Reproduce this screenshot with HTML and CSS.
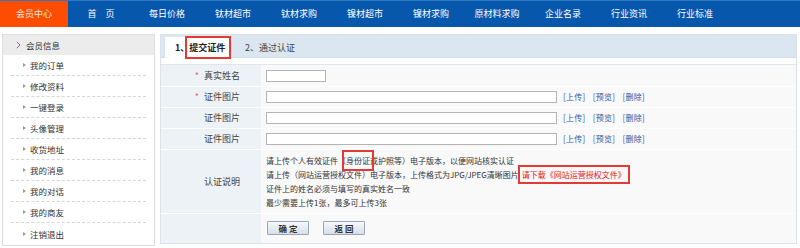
FILE: index.html
```html
<!DOCTYPE html>
<html lang="zh-CN">
<head>
<meta charset="utf-8">
<title>会员中心</title>
<link rel="stylesheet" href="styles.css">
</head>
<body>
<nav class="topnav">
  <a class="nav-item active">会员中心</a>
  <a class="nav-item">首&emsp;页</a>
  <a class="nav-item">每日价格</a>
  <a class="nav-item">钛材超市</a>
  <a class="nav-item">钛材求购</a>
  <a class="nav-item">镍材超市</a>
  <a class="nav-item">镍材求购</a>
  <a class="nav-item">原材料求购</a>
  <a class="nav-item">企业名录</a>
  <a class="nav-item">行业资讯</a>
  <a class="nav-item">行业标准</a>
</nav>
<div class="page">
  <aside class="sidebar">
    <div class="side-head">
      <svg class="chev" width="5" height="8" viewBox="0 0 5 8"><path d="M0.8 0.8 L4 4 L0.8 7.2" fill="none" stroke="#777" stroke-width="1"/></svg>
      <span>会员信息</span>
    </div>
    <ul class="side-list">
      <li><i class="tri"></i>我的订单</li>
      <li><i class="tri"></i>修改资料</li>
      <li><i class="tri"></i>一键登录</li>
      <li><i class="tri"></i>头像管理</li>
      <li><i class="tri"></i>收货地址</li>
      <li><i class="tri"></i>我的消息</li>
      <li><i class="tri"></i>我的对话</li>
      <li><i class="tri"></i>我的商友</li>
      <li class="last"><i class="tri"></i>注销退出</li>
    </ul>
  </aside>
  <main class="panel">
    <div class="tabs">
      <div class="tab active">1、<span class="mark tab-mark">提交证件</span></div>
      <div class="tab">2、通过认证</div>
    </div>
    <table class="form">
      <tr class="r1">
        <th><span class="req">*</span>真实姓名</th>
        <td><input class="inp short" type="text"></td>
      </tr>
      <tr class="r2">
        <th><span class="req">*</span>证件图片</th>
        <td><input class="inp long" type="text"><span class="ops"><a>[上传]</a> <a>[预览]</a> <a>[删除]</a></span></td>
      </tr>
      <tr class="r2">
        <th>证件图片</th>
        <td><input class="inp long" type="text"><span class="ops"><a>[上传]</a> <a>[预览]</a> <a>[删除]</a></span></td>
      </tr>
      <tr class="r2">
        <th>证件图片</th>
        <td><input class="inp long" type="text"><span class="ops"><a>[上传]</a> <a>[预览]</a> <a>[删除]</a></span></td>
      </tr>
      <tr class="r5">
        <th>认证说明</th>
        <td>
          <div class="desc">
            <p>请上传个人有效证件（<span class="mark id-mark">身份证</span>或护照等）电子版本，以便网站核实认证</p>
            <p>请上传（网站运营授权文件）电子版本，上传格式为JPG/JPEG清晰图片<a class="mark dl">请下载《网站运营授权文件》</a></p>
            <p>证件上的姓名必须与填写的真实姓名一致</p>
            <p>最少需要上传1张，最多可上传3张</p>
          </div>
        </td>
      </tr>
      <tr class="r6">
        <th></th>
        <td><div class="btns"><button class="btn">确 定</button><button class="btn">返 回</button></div></td>
      </tr>
    </table>
  </main>
</div>
</body>
</html>
```

FILE: styles.css
```css
* { box-sizing: border-box; }
body {
  margin: 0;
  font-family: "Noto Sans CJK SC", "Liberation Sans", sans-serif;
  color: #333;
  background: #fff;
}
a { text-decoration: none; }

.topnav {
  display: flex;
  height: 27px;
  background: #0757ad;
  border-top: 1px solid #2f78c4;
}
.nav-item {
  width: 66px;
  text-align: center;
  color: #fff;
  font-size: 9px;
  line-height: 26px;
}
.nav-item.active {
  width: 68px;
  background: #ff4d00;
  color: #ffe9dd;
}

.page {
  display: flex;
  gap: 5px;
  padding: 7px 3px 0 2px;
}

.sidebar {
  width: 153px;
  height: 212px;
  border: 1px solid #dedede;
  background: #fff;
}
.side-head {
  height: 20px;
  background: #ececec;
  display: flex;
  align-items: center;
  gap: 5px;
  padding-left: 13px;
  font-size: 8.5px;
  color: #333;
}
.side-list {
  list-style: none;
  margin: 0;
  padding: 0 8px;
}
.side-list li {
  height: 21px;
  display: flex;
  align-items: center;
  gap: 4px;
  padding-left: 12px;
  font-size: 8.5px;
  border-bottom: 1px dashed #d6d6d6;
}
.side-list li.last { border-bottom: none; }
.tri {
  width: 0;
  height: 0;
  border-top: 2.5px solid transparent;
  border-bottom: 2.5px solid transparent;
  border-left: 3px solid #9a9a9a;
}

.panel {
  flex: 1;
  height: 210px;
  border: 1px solid #dbe2ea;
  background: #fff;
}
.tabs {
  height: 23px;
  background: #dbe6f0;
  display: flex;
  align-items: flex-end;
  padding-left: 4px;
  border-bottom: 1px solid #d3dee9;
}
.tab {
  height: 20px;
  display: flex;
  align-items: center;
  font-size: 9px;
  color: #444;
  padding-left: 15px;
}
.tab.active {
  width: 65px;
  padding-left: 10px;
  background: #fff;
  font-weight: bold;
  color: #222;
  margin-bottom: -1px;
  height: 21px;
}

.mark {
  outline: 2px solid #e23a35;
}
.tab-mark {
  padding: 3px 4px 3px 2px;
  margin: 0 -4px 0 -2px;
}

.form {
  width: 100%;
  margin-top: 6px;
  border-collapse: collapse;
  border-top: 1px solid #dfe6ee;
}
.form th {
  width: 100px;
  background: #edf2f7;
  text-align: right;
  padding: 0 21px 0 0;
  font-size: 9px;
  line-height: 12px;
  font-weight: normal;
  color: #444;
  border-bottom: 1px solid #fff;
}
.form td {
  background: #f9f9f9;
  padding: 0 0 0 5px;
  font-size: 8px;
  line-height: 12px;
  border-bottom: 1px solid #fff;
}
.form tr.r1 { height: 22px; }
.form tr.r2 { height: 21px; }
.form tr.r5 { height: 64px; }
.form tr.r6 { height: 29px; }
.form tr:last-child th, .form tr:last-child td { border-bottom: none; }

.req {
  color: #e26a6a;
  margin-right: 5px;
}

.inp {
  height: 12px;
  border: 1px solid #b4b4b4;
  background: #fff;
  vertical-align: middle;
  padding: 0;
  margin: 0;
}
.inp.short { width: 60px; }
.inp.long { width: 291px; }
.ops {
  margin-left: 6px;
  font-size: 8px;
  vertical-align: middle;
  word-spacing: 5px;
  letter-spacing: 0.3px;
}
.ops a { color: #34559f; }

.desc { font-size: 8px; color: #333; }
.desc p {
  margin: 0;
  line-height: 14px;
  white-space: nowrap;
}
.id-mark {
  padding: 3px 2px;
  margin: 0 -2px;
}
.dl {
  color: #e8141a;
  padding: 2px 2px;
  margin-left: 1px;
}

.btns {
  display: flex;
  gap: 14px;
  padding-left: 1px;
}
.btn {
  width: 42px;
  height: 14px;
  padding: 0;
  border: 1px solid #9aa7b6;
  border-radius: 1px;
  background: linear-gradient(#f7f9fc, #d5dfea);
  font-family: "Noto Sans CJK SC", "Liberation Sans", sans-serif;
  font-size: 8.5px;
  font-weight: bold;
  color: #333;
  line-height: 12px;
}
```
